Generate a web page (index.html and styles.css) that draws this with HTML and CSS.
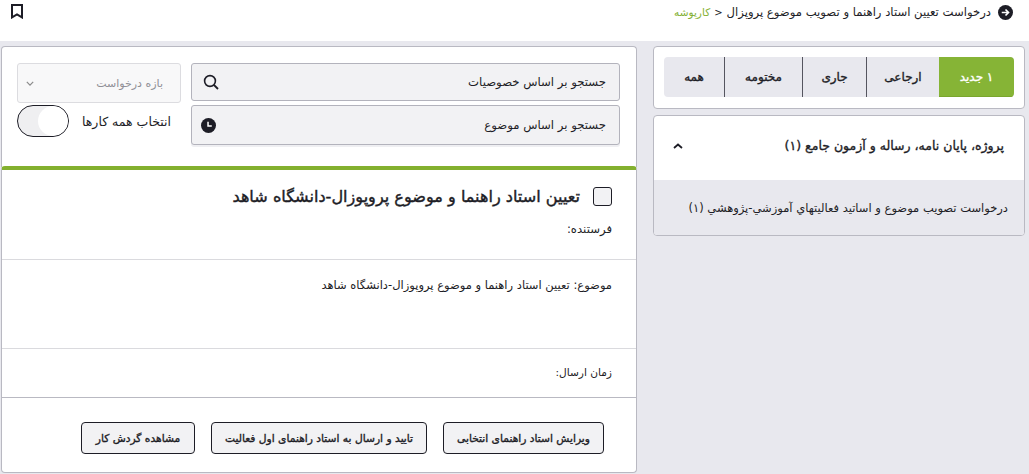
FILE: index.html
```html
<!DOCTYPE html>
<html lang="fa" dir="rtl">
<head>
<meta charset="utf-8">
<title>کارپوشه</title>
<link rel="stylesheet" href="styles.css">
</head>
<body>
<header class="topbar">
  <div class="crumbs">
    <svg class="back" viewBox="0 0 16 16" width="15" height="15"><circle cx="8" cy="8" r="8" fill="#1d1d26"/><path d="M4 8h7M8 4.8 11.2 8 8 11.2" fill="none" stroke="#fff" stroke-width="1.8"/></svg>
    <span>درخواست تعیین استاد راهنما و تصویب موضوع پروپزال</span>
    <bdi class="sep" dir="ltr">&gt;</bdi>
    <span class="green">کارپوشه</span>
  </div>
  <svg class="bookmark" viewBox="0 0 12 15" width="12" height="15"><path d="M1 1h10v12.4L6 10.4l-5 3z" fill="none" stroke="#1d1d26" stroke-width="2"/></svg>
</header>
<main class="layout">
  <aside class="side">
    <section class="card tabs-card">
      <div class="tabs">
        <div class="tab active t1">۱ جدید</div>
        <div class="tab t2">ارجاعی</div>
        <div class="tab t3">جاری</div>
        <div class="tab t4">مختومه</div>
        <div class="tab t5">همه</div>
      </div>
    </section>
    <section class="card accordion">
      <div class="acc-head">
        <span>پروژه، پایان نامه، رساله و آزمون جامع (۱)</span>
        <svg viewBox="0 0 10 6" width="10" height="6"><path d="M1 5l4-3.5L9 5" fill="none" stroke="#1d1d26" stroke-width="1.8"/></svg>
      </div>
      <div class="acc-body">درخواست تصويب موضوع و اساتيد فعاليتهاي آموزشي-پژوهشي (۱)</div>
    </section>
  </aside>
  <div class="content">
    <section class="card filters">
      <div class="search-col">
        <div class="search s1"><span>جستجو بر اساس خصوصیات</span>
          <svg viewBox="0 0 16 16" width="16" height="16"><circle cx="7" cy="7" r="5.4" fill="none" stroke="#1d1d26" stroke-width="1.6"/><path d="M11 11l4 4" stroke="#1d1d26" stroke-width="1.8"/></svg>
        </div>
        <div class="search s2"><span>جستجو بر اساس موضوع</span>
          <svg class="clock" viewBox="0 0 16 16" width="16" height="16"><circle cx="8" cy="8" r="8" fill="#1d1d26"/><path d="M7.5 4v4.5h4" fill="none" stroke="#fff" stroke-width="1.6"/></svg>
        </div>
      </div>
      <div class="filter-col">
        <div class="select"><span>بازه درخواست</span>
          <svg viewBox="0 0 10 6" width="8" height="5"><path d="M1 1l4 4 4-4" fill="none" stroke="#8a8a8a" stroke-width="1.5"/></svg>
        </div>
        <div class="toggle-row"><span>انتخاب همه کارها</span><div class="toggle"><div class="knob"></div></div></div>
      </div>
    </section>
    <article class="card task">
      <div class="task-head">
        <h1><span class="check"></span>تعیین استاد راهنما و موضوع پروپوزال-دانشگاه شاهد</h1>
        <p class="sender">فرستنده:</p>
      </div>
      <div class="task-subject">موضوع: تعیین استاد راهنما و موضوع پروپوزال-دانشگاه شاهد</div>
      <div class="task-time">زمان ارسال:</div>
      <div class="task-actions">
        <button class="b1">ویرایش استاد راهنمای انتخابی</button>
        <button class="b2">تایید و ارسال به استاد راهنمای اول فعالیت</button>
        <button class="b3">مشاهده گردش کار</button>
      </div>
    </article>
  </div>
</main>
</body>
</html>
```
FILE: styles.css
```css
* { box-sizing: border-box; }
html, body { margin: 0; height: 474px; overflow: hidden; }
body { background: #e8e8ee; color: #1d1d26; font-family: "DejaVu Sans", sans-serif; font-size: 11.5px; }
.topbar { height: 41px; background: #fff; display: flex; justify-content: space-between; padding: 4px 16px 0 11px; }
.crumbs { display: flex; align-items: center; gap: 4px; height: 16px; font-size: 11.65px; }
.back { margin-left: 3px; }
.sep { font-size: 10px; }
.green { color: #84b135; font-size: 10.5px; }
.layout { display: flex; gap: 16px; padding: 5px 4px 0 0; }
.side { width: 372px; display: flex; flex-direction: column; gap: 6px; }
.content { width: 636px; display: flex; flex-direction: column; }
.card { background: #fff; border: 1px solid #b9b9c2; border-radius: 4px; }
.tabs-card { height: 63px; padding: 10px; }
.tabs { display: flex; height: 40px; border-radius: 4px; background: #e8e8ee; overflow: hidden; }
.tab { display: flex; align-items: center; justify-content: center; font-size: 12px; -webkit-text-stroke: 0.35px currentColor; border-left: 1px solid #55555f; }
.t1 { width: 75px; } .t2 { width: 73px; } .t3 { width: 64px; } .t4 { width: 78px; } .t5 { flex: 1; border-left: 0; }
.active { background: #86b436; color: #fff; border-left: 0; border-bottom: 1px solid #7aa62e; }
.accordion { height: 121px; overflow: hidden; }
.acc-head { height: 64px; display: flex; justify-content: space-between; align-items: center; padding: 0 20px 5px 19px; font-size: 12.5px; -webkit-text-stroke: 0.35px currentColor; }
.acc-body { height: 56px; background: #e8e8ee; padding: 21px 16px 0 0; }
.filters { height: 121px; display: flex; gap: 10px; padding: 16px 16px 0 15px; border-bottom: 0; border-radius: 4px 4px 0 0; }
.search-col { width: 429px; flex-shrink: 0; display: flex; flex-direction: column; gap: 4px; }
.search { background: #f2f2f4; border: 1px solid #b3b3bc; border-radius: 3px; display: flex; align-items: center; justify-content: space-between; padding: 0 13px 0 11px; font-size: 11.7px; }
.s1 { height: 38px; }
.s2 { height: 40px; padding-left: 9px; box-shadow: 0 2px 0 #efeff2; }
.clock { width: 15px; height: 15px; }
.filter-col { width: 164px; flex-shrink: 0; display: flex; flex-direction: column; gap: 2px; }
.select { height: 40px; background: #f8f8f9; border: 1px solid #dcdce0; border-radius: 3px; display: flex; align-items: center; justify-content: space-between; padding: 0 17px 0 8px; color: #8f8f96; font-size: 11px; }
.toggle-row { display: flex; justify-content: space-between; align-items: center; height: 32px; padding-right: 10px; font-size: 12.5px; }
.toggle { width: 52px; height: 32px; border: 1px solid #1d1d26; border-radius: 16px; background: #efeff1; overflow: hidden; display: flex; }
.knob { width: 30px; height: 30px; border-radius: 50%; background: #fff; }
.task { height: 307px; border-top: 4px solid #83b02e; display: flex; flex-direction: column; margin-top: -1px; }
.task-head { height: 90px; border-bottom: 1px solid #dadade; padding: 14px 24px 0; }
h1 { margin: 0; display: flex; align-items: center; gap: 13px; font-size: 16.1px; font-weight: 400; -webkit-text-stroke: 0.4px currentColor; height: 24px; }
.check { width: 19px; height: 19px; border: 1px solid #1d1d26; border-radius: 3px; background: #f2f2f4; flex-shrink: 0; }
.sender { margin: 14px 0 0; font-size: 11.7px; }
.task-subject { height: 89px; border-bottom: 1px solid #dadade; padding: 18px 24px 0; }
.task-time { height: 49px; border-bottom: 1px solid #b9b9c2; padding: 17px 24px 0; font-size: 10.6px; }
.task-actions { display: flex; gap: 16px; padding: 24px 32px 0; }
button { height: 32px; background: #f2f2f4; border: 1px solid #1d1d26; border-radius: 4px; color: #1d1d26; font: 400 10.7px "DejaVu Sans", sans-serif; -webkit-text-stroke: 0.35px currentColor; padding: 0; white-space: nowrap; }
.b1 { width: 161px; } .b2 { width: 216px; } .b3 { width: 114px; }
```
